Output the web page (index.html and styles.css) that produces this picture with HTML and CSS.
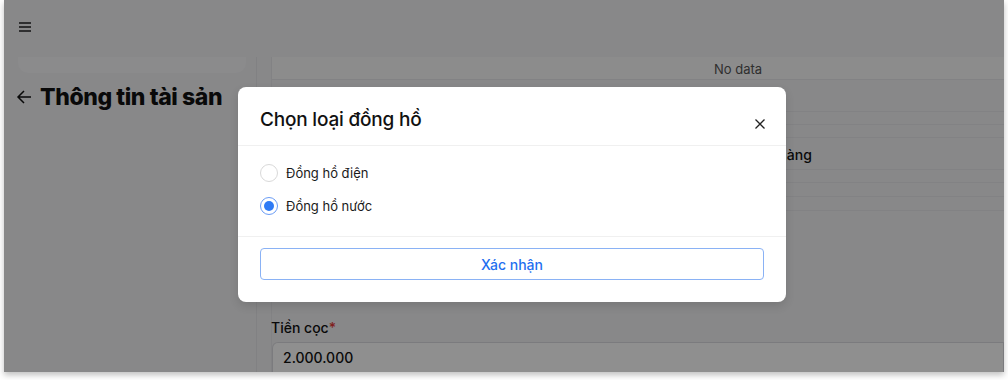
FILE: index.html
```html
<!DOCTYPE html>
<html lang="vi">
<head>
  <meta charset="UTF-8">
  <meta name="viewport" content="width=device-width, initial-scale=1.0">
  <title>Thông tin tài sản</title>
  <link rel="stylesheet" href="styles.css">
</head>
<body>
  <div class="window">
    <header class="topbar">
      <svg class="menu-icon" width="14" height="14" viewBox="0 0 14 14">
        <path d="M1 3h12M1 7h12M1 11h12" stroke="#222" stroke-width="1.3" fill="none"/>
      </svg>
    </header>

    <div class="layout">
      <aside class="sidebar">
        <div class="side-card"></div>
        <h1 class="page-title">
          <svg class="back-icon" width="16" height="16" viewBox="0 0 16 16">
            <path d="M15 8H2M8 2L2 8l6 6" stroke="#111" stroke-width="1.5" fill="none"/>
          </svg>
          Thông tin tài sản
        </h1>
      </aside>

      <main class="content">
        <div class="panel">
          <div class="row empty">No data</div>
          <div class="row gap"></div>
          <div class="row thin"></div>
          <div class="row thin"></div>
          <div class="row text">Ngân hàng</div>
          <div class="row thin"></div>
          <div class="row tall"></div>
          <div class="row tall"></div>
          <div class="field">
            <label>Tiền cọc<span class="req">*</span></label>
            <div class="input">2.000.000</div>
          </div>
        </div>
      </main>
    </div>

    <div class="overlay">
      <div class="modal">
        <div class="modal-header">
          <h2>Chọn loại đồng hồ</h2>
          <svg class="close-icon" width="12" height="12" viewBox="0 0 12 12">
            <path d="M1.5 1.5l9 9M10.5 1.5l-9 9" stroke="#222" stroke-width="1.3" fill="none"/>
          </svg>
        </div>
        <div class="modal-body">
          <label class="radio"><span class="dot"></span>Đồng hồ điện</label>
          <label class="radio checked"><span class="dot"></span>Đồng hồ nước</label>
        </div>
        <div class="modal-footer">
          <button class="btn">Xác nhận</button>
        </div>
      </div>
    </div>
  </div>
</body>
</html>
```

FILE: styles.css
```css
* {
  margin: 0;
  padding: 0;
  box-sizing: border-box;
}

body {
  font-family: 'Inter', 'Noto Sans', sans-serif;
  background-color: #fff;
  color: #1a1a1a;
  width: 1008px;
  height: 380px;
  overflow: hidden;
}

.window {
  position: relative;
  margin: 0 4px;
  width: 1000px;
  height: 372px;
  background-color: #f2f2f5;
  overflow: hidden;
  box-shadow: 0 3px 6px rgba(0, 0, 0, 0.25);
}

.topbar {
  height: 57px;
  padding: 20px 14px;
}

.menu-icon {
  display: block;
}

.layout {
  display: flex;
  height: 315px;
}

.sidebar {
  width: 253px;
  padding: 0 10px 0 14px;
  border-right: 1px solid #e6e6ea;
}

.side-card {
  height: 16px;
  background-color: #f8f8fa;
  border-radius: 0 0 10px 10px;
}

.page-title {
  display: flex;
  align-items: center;
  gap: 8px;
  margin-top: 10px;
  margin-left: -2px;
  font-size: 23px;
  font-weight: 800;
  color: #111;
  white-space: nowrap;
  letter-spacing: -0.4px;
}

.content {
  flex: 1;
  padding-left: 14px;
}

.panel {
  height: 100%;
  border-left: 1px solid #e8e8ec;
  display: flex;
  flex-direction: column;
}

.row {
  border-bottom: 1px solid #e8e8ec;
}

.row.empty {
  height: 23px;
  background-color: #fafafa;
  text-align: center;
  font-size: 13px;
  color: #555;
  line-height: 25px;
  padding-left: 200px;
}

.row.gap {
  height: 32px;
}

.row.thin {
  height: 13px;
}

.row.text {
  height: 32px;
  font-size: 14px;
  font-weight: 500;
  line-height: 34px;
  padding-left: 467px;
  color: #111;
}

.row.tall {
  height: 14px;
}

.field {
  margin-top: auto;
  padding-top: 12px;
}

.field label {
  display: block;
  font-size: 14px;
  font-weight: 500;
  margin-bottom: 6px;
  margin-left: -1px;
  color: #111;
}

.req {
  color: #e53935;
}

.input {
  height: 30px;
  border: 1px solid #dcdce0;
  border-bottom: none;
  border-radius: 6px 0 0 0;
  background-color: #fff;
  padding: 6px 10px;
  font-size: 14px;
  font-weight: 500;
  color: #111;
}

.overlay {
  position: absolute;
  inset: 0;
  background-color: rgba(0, 0, 0, 0.44);
}

.modal {
  position: absolute;
  left: 234px;
  top: 87px;
  width: 548px;
  background-color: #fff;
  border-radius: 8px;
  box-shadow: 0 4px 10px rgba(0, 0, 0, 0.12);
}

.modal-header {
  display: flex;
  justify-content: space-between;
  align-items: flex-end;
  height: 59px;
  padding: 0 20px 14px 22px;
  border-bottom: 1px solid #f0f0f0;
}

.modal-header h2 {
  font-size: 19px;
  font-weight: 500;
  color: #111;
  line-height: 24px;
  margin-bottom: -1px;
  letter-spacing: -0.2px;
}

.close-icon {
  margin-bottom: 1px;
}

.modal-body {
  display: flex;
  flex-direction: column;
  gap: 9px;
  padding: 15px 22px 18px;
  border-bottom: 1px solid #f0f0f0;
}

.radio {
  display: flex;
  align-items: center;
  gap: 8px;
  height: 24px;
  font-size: 13px;
  color: #1a1a1a;
}

.dot {
  width: 18px;
  height: 18px;
  border-radius: 50%;
  border: 1px solid #d9d9d9;
  display: flex;
  align-items: center;
  justify-content: center;
}

.radio.checked .dot {
  border-color: #6a9cf5;
}

.radio.checked .dot::after {
  content: "";
  width: 10px;
  height: 10px;
  border-radius: 50%;
  background-color: #2f7bf5;
}

.modal-footer {
  padding: 11px 22px 22px;
}

.btn {
  width: 100%;
  height: 32px;
  background-color: #fff;
  border: 1px solid #8ab2f5;
  border-radius: 4px;
  color: #1f6ff0;
  font-family: inherit;
  font-size: 14px;
  font-weight: 500;
}
```
